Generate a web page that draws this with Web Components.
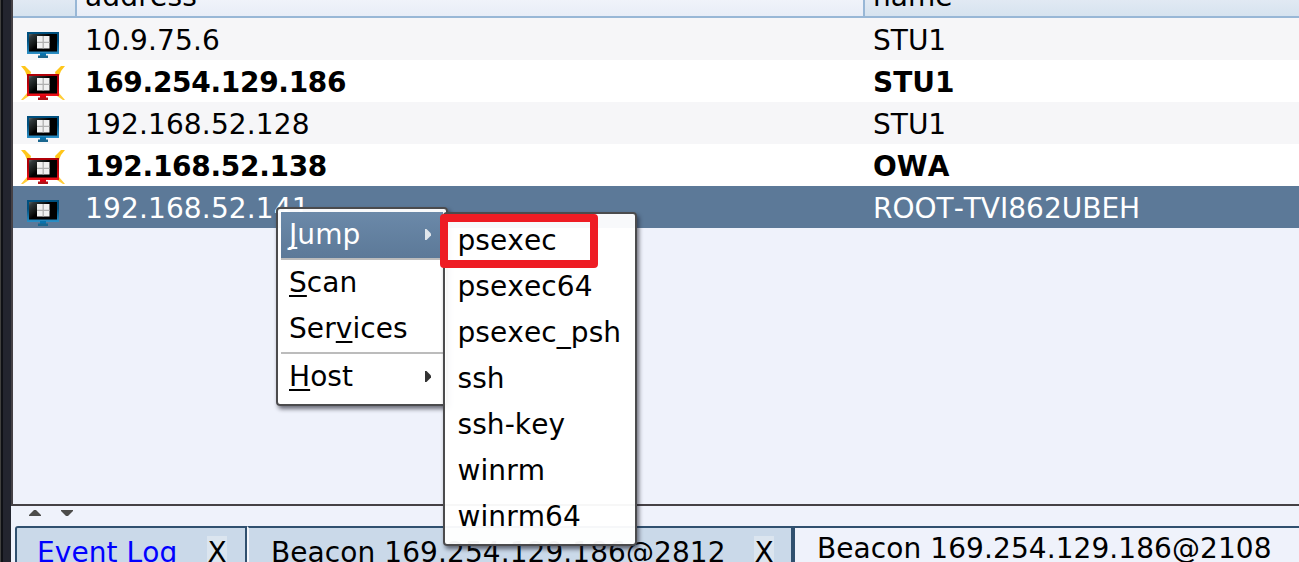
<!DOCTYPE html>
<html lang="en">
<head>
<meta charset="utf-8">
<title>Targets</title>
<style>
html,body{margin:0;height:100%;overflow:hidden}
body{font:28px/42px "DejaVu Sans",sans-serif;font-kerning:none;color:#000;background:#eff2fb}
</style>
</head>
<body>
<target-app></target-app>
<script>
const define = (name, html, setup) => customElements.define(name, class extends HTMLElement {
  connectedCallback() {
    if (this.shadowRoot) return;
    this.attachShadow({mode: 'open'}).innerHTML = html;
    if (setup) setup(this, this.shadowRoot);
  }
});

define('host-icon', `
<style>:host{display:block;width:44px;height:36px}svg{display:block}
.rays{display:none}:host([owned]) .rays{display:block}
.a{stop-color:#00507f}.b{stop-color:#2c8fc6}.stand{fill:#0a73ad}.foot{fill:#1b678f}
:host([owned]) .a{stop-color:#b00008}:host([owned]) .b{stop-color:#f01018}:host([owned]) .stand{fill:#e00010}:host([owned]) .foot{fill:#b31218}</style>
<svg width="44" height="36" viewBox="0 0 44 36">
<defs><linearGradient id="f" x1="0" y1="0" x2="0" y2="1"><stop class="a" offset="0"/><stop class="a" offset=".4"/><stop class="b" offset="1"/></linearGradient>
<linearGradient id="s" x1="0" y1="0" x2="1" y2=".7"><stop offset="0" stop-color="#5b6664"/><stop offset=".12" stop-color="#30383a"/><stop offset=".4" stop-color="#101312"/><stop offset=".5" stop-color="#000"/></linearGradient></defs>
<g class="rays"><path d="M0 0h4l6 6-1 4H6L4 5z" fill="#ffc61a"/><path d="M44 0h-4l-6 6 1 4h3l2-5z" fill="#ffc61a"/><path d="M0 34l6-7 2 3-6 4zM44 34l-6-7-2 3 6 4z" fill="#ffcd38"/></g>
<rect x="6" y="8" width="32" height="22" fill="url(#f)"/>
<rect x="8" y="10" width="28" height="17.500" fill="url(#s)"/>
<path d="M16 12h12.500v12.500H16z" fill="#f0f0f0"/><path d="M16 18.300h12.500M22.200 12v12.500" stroke="#b0b0b0" stroke-width="1.300"/>
<path class="stand" d="M19 29h6v3h-6z"/><path class="foot" d="M17 31.500h10V34H17z"/>
</svg>`);

define('table-head', `
<style>:host{display:grid;grid-template-columns:64px 788px 1fr;height:16px;border-bottom:2px solid #98b7d6;overflow:hidden}
div{height:16px;display:flex;align-items:flex-end;line-height:33px;box-sizing:border-box;background:linear-gradient(#e1e9f3,#d6e3ef)}
.ic,.ad{border-right:2px solid #98b7d6}
.ad{background:linear-gradient(#f0f3fa,#e8edf7)}
span{margin-bottom:3px}.ad{padding-left:8px;letter-spacing:.2px}.nm{padding-left:8px}</style>
<div class="ic"></div><div class="ad"><span>address</span></div><div class="nm"><span>name</span></div>`);

define('target-row', `
<style>:host{display:grid;grid-template-columns:72px 788px 1fr;height:42px;line-height:45px;background:#f6f6f8}
:host([owned]){background:#fff;font-weight:bold}:host([selected]){background:#5c7998;color:#fff}
host-icon{margin:6px 0 0 8px}.ip{letter-spacing:.15px}:host([owned]) .ip{letter-spacing:-.3px}.name{white-space:nowrap}
</style>
<host-icon></host-icon><span class="ip"><slot name="ip"></slot></span><span class="name"><slot></slot></span>`,
(h, r) => { if (h.hasAttribute('owned')) r.querySelector('host-icon').setAttribute('owned', ''); });

define('log-tab', `
<style>:host{display:flex;box-sizing:border-box;height:40px;border-top:2px solid #30506f;border-left:2px solid #f4f6fb;border-right:2px solid #30506f;background:#cad9e9;line-height:33px;padding-top:8px;white-space:nowrap;letter-spacing:.08px}
:host([first]){border-left-color:#30506f;border-top-left-radius:3px;color:#00f}
:host([active]){background:#eff2fb;flex:1;border-left-color:#30506f;padding-top:4px;border-right:0}
.x{width:20px;height:33px;background:#dbe5ef;color:#000;text-indent:.5px;margin:0 17px 0 auto}:host([first]) .x{margin-right:18px}</style>
<span><slot></slot></span><span class="x">X</span>`,
(h, r) => { if (h.hasAttribute('active')) r.querySelector('.x').remove(); });

define('menu-item', `
<style>:host{display:flex;height:46px;line-height:46px;padding-left:8px;align-items:flex-start;white-space:nowrap;letter-spacing:.08px}
:host([selected]){background:linear-gradient(#6b89a9,#5c7998);color:#fff}
:host([divided]){border-bottom:2px solid #bcbcbc}
svg{display:none;margin:17px 12px 0 auto}:host([sub]) svg{display:block}</style>
<span><slot></slot></span><svg width="6" height="11" viewBox="0 0 6 11"><path d="M0 0h1.500L6 4.500v2L1.500 11H0z" fill="currentColor" opacity=".8"/></svg>`);

define('popup-menu', `
<style>:host{display:block;box-sizing:border-box;border:2px solid #4b4b4d;border-radius:4px;background:rgba(255,255,255,.955);padding:4px 3px;box-shadow:2px 3px 4px rgba(20,20,35,.6)}</style><slot></slot>`);

define('target-app', `
<style>
:host{display:grid;grid-template-columns:11px 1fr;height:562px;position:relative;overflow:hidden}
.edge{background:linear-gradient(90deg,#41413f 1px,#0f1116 1px,#0f1116 3px,#23252f 3px)}
main{min-width:0}
.table{height:506px;box-sizing:border-box;border-left:2px solid #454145;border-bottom:2px solid #454145}
.divider{height:20px;display:flex;gap:20px;padding:4px 0 0 18px;box-sizing:border-box}
.divider svg{display:block}
.tabs{display:flex;padding-left:4px;height:36px}
.t1{width:232px;padding-left:20px}.t2{width:546px;padding-left:22px}.t3{padding-left:22px}
.one,.two,.mark{position:absolute}
.one{left:276px;top:207px;width:172px;height:199px;padding-top:3px}
.two{left:443px;top:212px;width:194px;height:334px}
.two menu-item{padding-left:9.500px}
.mark{left:440px;top:214px;width:158px;height:54px;box-sizing:border-box;border:8px solid #ee1c24;border-radius:4px}
u{text-decoration-thickness:2px;text-underline-offset:3px;text-decoration-skip-ink:none}
</style>
<div class="edge"></div>
<main>
<div class="table"><table-head></table-head>
<target-row><span slot="ip">10.9.75.6</span>STU1</target-row>
<target-row owned><span slot="ip">169.254.129.186</span>STU1</target-row>
<target-row><span slot="ip">192.168.52.128</span>STU1</target-row>
<target-row owned><span slot="ip">192.168.52.138</span>OWA</target-row>
<target-row selected><span slot="ip">192.168.52.141</span>ROOT-TVI862UBEH</target-row></div>
<div class="divider"><svg width="12" height="6"><path d="M5 0h2l5 5v1H0V5z" fill="#4c4c4a"/></svg><svg width="12" height="6"><path d="M0 0h12v1L7 6H5L0 1z" fill="#4c4c4a"/></svg></div>
<div class="tabs"><log-tab class="t1" first>Event Log</log-tab><log-tab class="t2">Beacon 169.254.129.186@2812</log-tab><log-tab class="t3" active>Beacon 169.254.129.186@2108</log-tab></div>
</main>
<popup-menu class="one"><menu-item selected divided sub><u>J</u>ump</menu-item><menu-item><u>S</u>can</menu-item><menu-item divided>Ser<u>v</u>ices</menu-item><menu-item sub><u>H</u>ost</menu-item></popup-menu>
<popup-menu class="two"><menu-item>psexec</menu-item><menu-item>psexec64</menu-item><menu-item>psexec_psh</menu-item><menu-item>ssh</menu-item><menu-item>ssh-key</menu-item><menu-item>winrm</menu-item><menu-item>winrm64</menu-item></popup-menu>
<div class="mark"></div>`);
</script>
</body>
</html>
